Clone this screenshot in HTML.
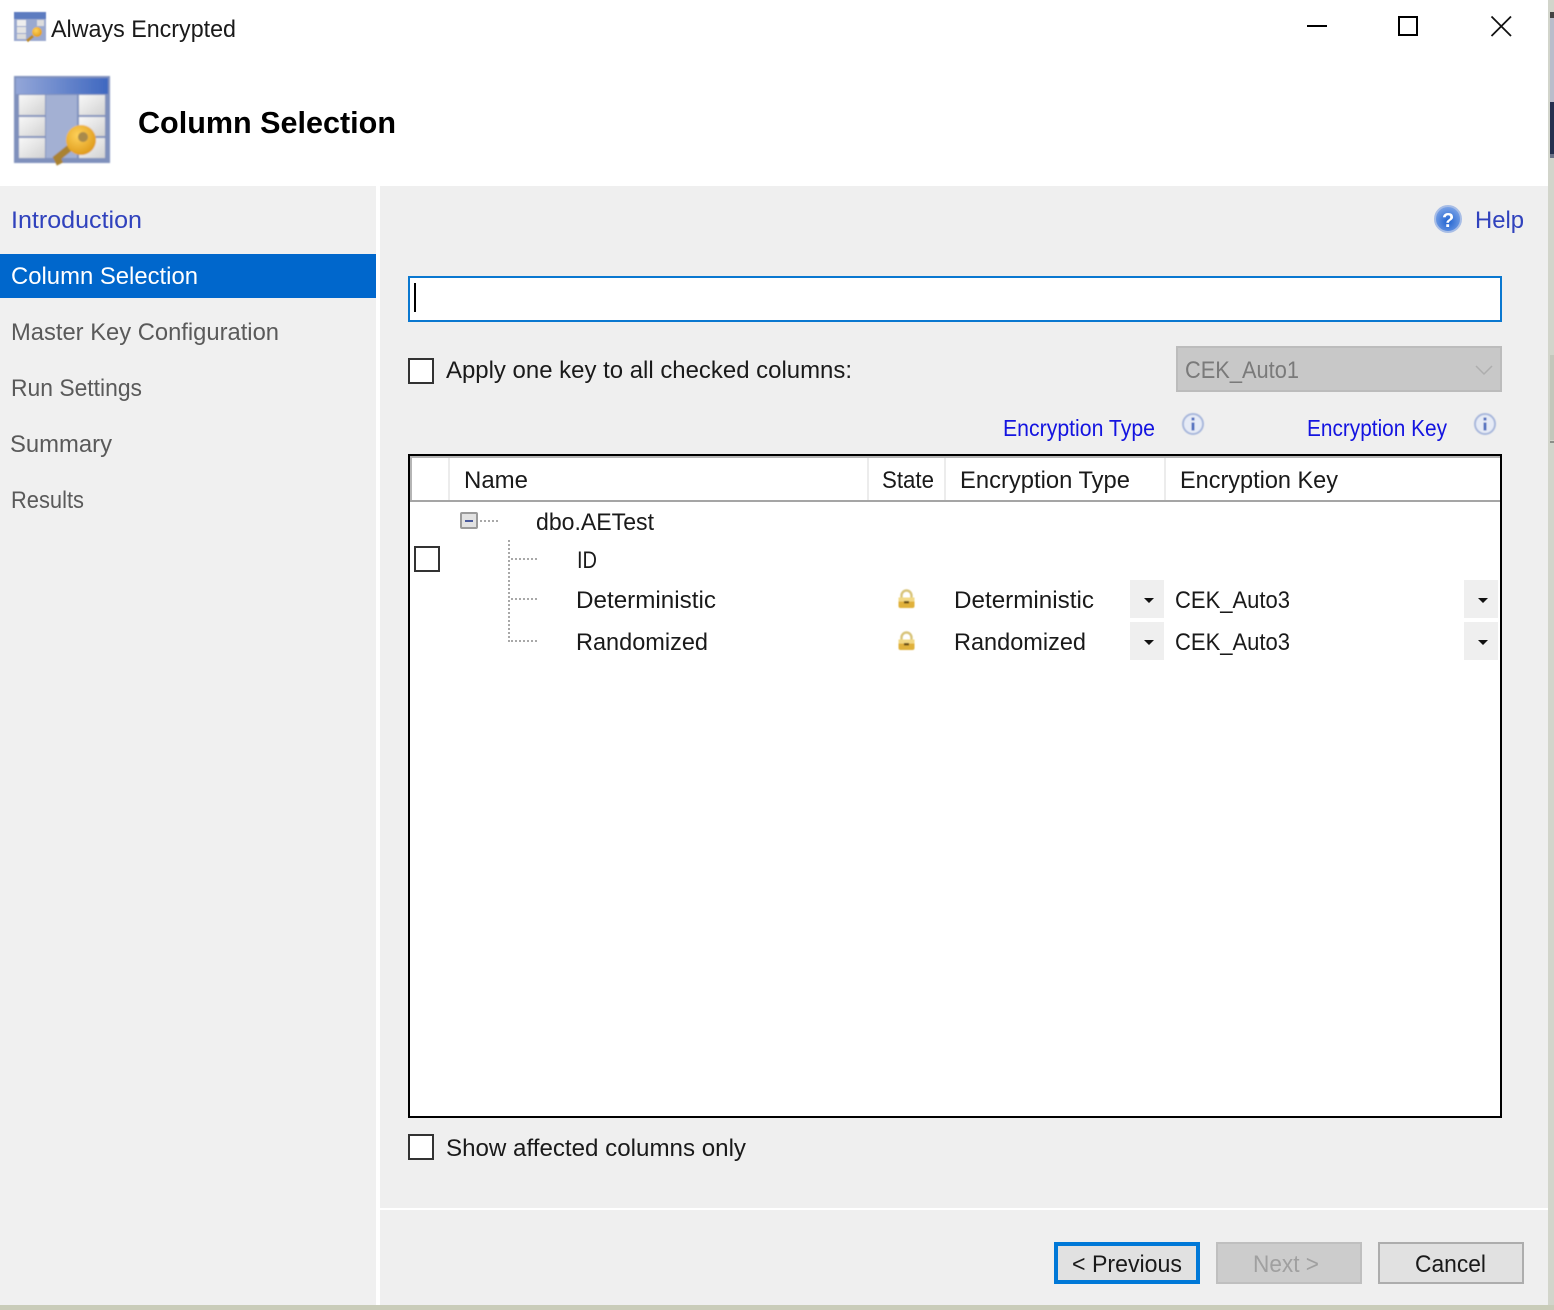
<!DOCTYPE html>
<html lang="en"><head><meta charset="utf-8"><title>Always Encrypted</title>
<style>
html,body{margin:0;padding:0;background:#fff;width:1554px;height:1310px;overflow:hidden}
svg{display:block}
text{font-family:"Liberation Sans",sans-serif;font-size:24px;fill:#1a1a1a}
.nav{fill:#5a5a5a}
.lnk{fill:#1414e0;font-size:23px}
.blu{fill:#3042bd}
</style></head><body>
<svg xmlns="http://www.w3.org/2000/svg" width="1554" height="1310" viewBox="0 0 1554 1310">
<defs>
<filter id="soft" x="-10%" y="-10%" width="120%" height="120%"><feGaussianBlur stdDeviation="0.8"/></filter>
<filter id="soft2" x="-20%" y="-20%" width="140%" height="140%"><feGaussianBlur stdDeviation="0.6"/></filter>
<linearGradient id="hd" x1="0" x2="1" y1="0" y2="0"><stop offset="0" stop-color="#93a6d8"/><stop offset="1" stop-color="#3f68c0"/></linearGradient>
<linearGradient id="cell" x1="0" x2="1" y1="0" y2="1"><stop offset="0" stop-color="#f8f8f8"/><stop offset="1" stop-color="#d2d2d2"/></linearGradient>
<radialGradient id="gold" cx=".4" cy=".35" r=".8"><stop offset="0" stop-color="#ffd25a"/><stop offset="1" stop-color="#d8900f"/></radialGradient>
<radialGradient id="hb" cx=".5" cy=".6" r=".6"><stop offset="0" stop-color="#1f62d0"/><stop offset="1" stop-color="#7fa6e8"/></radialGradient>
<g id="lock" filter="url(#soft2)"><path d="M3.5 8V5.5a5 5 0 0 1 10 0V8" fill="none" stroke="#d8c47a" stroke-width="2.4"/><rect x="0.5" y="7.5" width="16" height="10.5" rx="2" fill="#e0b13a"/><rect x="0.5" y="7.5" width="16" height="4" fill="#f2d884"/><rect x="6" y="11" width="5" height="2.5" fill="#6e5312"/></g>
<g id="info" filter="url(#soft2)"><circle cx="11" cy="11" r="10" fill="#e6ebf6" stroke="#a9b8dc" stroke-width="2"/><rect x="9.5" y="9.5" width="3" height="8" fill="#4f6fc0"/><rect x="9.5" y="4.5" width="3" height="3" fill="#4f6fc0"/></g>
</defs>

<!-- right window edge -->
<rect x="1548" y="0" width="6" height="1310" fill="#d2d5cb"/>
<rect x="1550" y="12" width="4" height="6" fill="#444"/>
<rect x="1550" y="18" width="4" height="84" fill="#b9bdcb"/>
<rect x="1550" y="102" width="4" height="52" fill="#25304f"/>
<rect x="1550" y="154" width="4" height="4" fill="#6b7287"/>
<rect x="1550" y="355" width="4" height="85" fill="#c3c7bb"/>
<rect x="1550" y="441" width="4" height="2" fill="#8c8f88"/>

<!-- title bar -->
<g filter="url(#soft2)">
<rect x="14" y="12" width="32" height="29" fill="#9aa9cf"/>
<rect x="14" y="12" width="32" height="7" fill="#5d7cc0"/>
<rect x="17" y="20" width="9" height="6" fill="#eee"/><rect x="17" y="27" width="9" height="6" fill="#e4e4e4"/><rect x="17" y="34" width="9" height="5" fill="#dcdcdc"/>
<rect x="37" y="20" width="7" height="6" fill="#ddd"/>
<circle cx="37" cy="32" r="5" fill="url(#gold)"/><path d="M33 36l-6 5" stroke="#b98a26" stroke-width="3"/>
</g>
<text x="51" y="37" textLength="185" lengthAdjust="spacingAndGlyphs">Always Encrypted</text>
<rect x="1307" y="25" width="20" height="2" fill="#000"/>
<rect x="1399" y="17" width="18" height="18" fill="none" stroke="#000" stroke-width="2"/>
<path d="M1491.5 16.5l19.5 19.5M1511 16.5l-19.5 19.5" stroke="#111" stroke-width="1.8" fill="none"/>

<!-- header icon -->
<g filter="url(#soft)">
<rect x="14" y="76" width="96" height="87" fill="#7f90bc"/>
<rect x="16" y="78" width="92" height="16" fill="url(#hd)"/>
<rect x="46" y="95" width="31" height="63" fill="#a3b0d3"/>
<rect x="19" y="95" width="26" height="20" fill="url(#cell)"/><rect x="19" y="117" width="26" height="19" fill="url(#cell)"/><rect x="19" y="138" width="26" height="20" fill="url(#cell)"/>
<rect x="79" y="95" width="26" height="20" fill="url(#cell)"/><rect x="79" y="117" width="26" height="19" fill="url(#cell)"/><rect x="79" y="138" width="26" height="20" fill="url(#cell)"/>
<path d="M72 146L57 158l3 6" stroke="#a98230" stroke-width="7" fill="none"/>
<circle cx="81" cy="140" r="15" fill="url(#gold)"/><circle cx="83" cy="137" r="5" fill="#a98a4c"/>
</g>
<text x="138" y="133" textLength="258" lengthAdjust="spacingAndGlyphs" style="font-weight:700;font-size:31px;fill:#000">Column Selection</text>

<!-- panels -->
<rect x="0" y="186" width="376" height="1119" fill="#f0f0f0"/>
<rect x="380" y="186" width="1168" height="1119" fill="#efefef"/>
<rect x="380" y="1208" width="1168" height="2" fill="#fff"/>
<rect x="0" y="1305" width="1554" height="5" fill="#c9ccb9"/>

<!-- sidebar -->
<rect x="0" y="254" width="376" height="44" fill="#0067cc"/>
<text class="blu" x="11" y="228" textLength="131" lengthAdjust="spacingAndGlyphs">Introduction</text>
<text x="11" y="284" textLength="187" lengthAdjust="spacingAndGlyphs" style="fill:#fff">Column Selection</text>
<text class="nav" x="11" y="340" textLength="268" lengthAdjust="spacingAndGlyphs">Master Key Configuration</text>
<text class="nav" x="11" y="396" textLength="131" lengthAdjust="spacingAndGlyphs">Run Settings</text>
<text class="nav" x="10" y="452" textLength="102" lengthAdjust="spacingAndGlyphs">Summary</text>
<text class="nav" x="11" y="508" textLength="73" lengthAdjust="spacingAndGlyphs">Results</text>

<!-- help -->
<circle cx="1448" cy="219" r="13" fill="url(#hb)" stroke="#a7bde6" stroke-width="2"/>
<text x="1442" y="227" style="font-size:20px;font-weight:700;fill:#fff">?</text>
<text class="blu" x="1475" y="228" textLength="49" lengthAdjust="spacingAndGlyphs">Help</text>

<!-- search -->
<rect x="409" y="277" width="1092" height="44" fill="#fff" stroke="#0a78d0" stroke-width="2"/>
<rect x="414" y="283" width="2" height="29" fill="#000"/>

<!-- apply key -->
<rect x="409" y="359" width="24" height="24" fill="#fff" stroke="#333" stroke-width="2"/>
<text x="446" y="378" textLength="406" lengthAdjust="spacingAndGlyphs">Apply one key to all checked columns:</text>
<rect x="1177" y="347" width="324" height="44" fill="#c8c8c8" stroke="#bcbcbc" stroke-width="2"/>
<text x="1185" y="378" textLength="114" lengthAdjust="spacingAndGlyphs" style="fill:#7a7a7a">CEK_Auto1</text>
<path d="M1476 366l8 8 8-8" fill="none" stroke="#aeaeae" stroke-width="1.5"/>

<!-- links -->
<text class="lnk" x="1003" y="436" textLength="152" lengthAdjust="spacingAndGlyphs">Encryption Type</text>
<use href="#info" x="1182" y="413"/>
<text class="lnk" x="1307" y="436" textLength="140" lengthAdjust="spacingAndGlyphs">Encryption Key</text>
<use href="#info" x="1474" y="413"/>

<!-- grid -->
<rect x="409" y="455" width="1092" height="662" fill="#fff" stroke="#000" stroke-width="2"/>
<rect x="410" y="456" width="1090" height="2" fill="#b5b5b5"/>
<rect x="410" y="458" width="2" height="42" fill="#b5b5b5"/>
<rect x="410" y="500" width="1090" height="2" fill="#a5a5a5"/>
<rect x="448" y="458" width="2" height="42" fill="#ececec"/>
<rect x="867" y="458" width="2" height="42" fill="#ececec"/>
<rect x="944" y="458" width="2" height="42" fill="#ececec"/>
<rect x="1164" y="458" width="2" height="42" fill="#ececec"/>
<text x="464" y="488" textLength="64" lengthAdjust="spacingAndGlyphs">Name</text>
<text x="882" y="488" textLength="52" lengthAdjust="spacingAndGlyphs">State</text>
<text x="960" y="488" textLength="170" lengthAdjust="spacingAndGlyphs">Encryption Type</text>
<text x="1180" y="488" textLength="158" lengthAdjust="spacingAndGlyphs">Encryption Key</text>

<!-- tree -->
<rect x="461" y="513" width="16" height="15" rx="1" fill="#e2e2e2" stroke="#9a9a9a" stroke-width="2"/>
<rect x="465" y="520" width="8" height="2" fill="#4a5a9c"/>
<path d="M480 521h18" stroke="#a8a8a8" stroke-width="2" stroke-dasharray="2 2"/>
<path d="M509 540v102" stroke="#a8a8a8" stroke-width="2" stroke-dasharray="2 2"/>
<path d="M511 559h28M511 599h28M511 641h28" stroke="#a8a8a8" stroke-width="2" stroke-dasharray="2 2"/>
<text x="536" y="530" textLength="118" lengthAdjust="spacingAndGlyphs">dbo.AETest</text>
<rect x="415" y="547" width="24" height="24" fill="#fff" stroke="#333" stroke-width="2"/>
<text x="577" y="568" textLength="20" lengthAdjust="spacingAndGlyphs">ID</text>
<text x="576" y="608" textLength="140" lengthAdjust="spacingAndGlyphs">Deterministic</text>
<text x="576" y="650" textLength="132" lengthAdjust="spacingAndGlyphs">Randomized</text>
<use href="#lock" x="898" y="590"/>
<use href="#lock" x="898" y="632"/>
<text x="954" y="608" textLength="140" lengthAdjust="spacingAndGlyphs">Deterministic</text>
<text x="954" y="650" textLength="132" lengthAdjust="spacingAndGlyphs">Randomized</text>
<rect x="1130" y="580" width="34" height="38" fill="#efefef"/>
<rect x="1130" y="622" width="34" height="38" fill="#efefef"/>
<path d="M1144 598h10l-5 5z M1144 640h10l-5 5z" fill="#111"/>
<text x="1175" y="608" textLength="115" lengthAdjust="spacingAndGlyphs">CEK_Auto3</text>
<text x="1175" y="650" textLength="115" lengthAdjust="spacingAndGlyphs">CEK_Auto3</text>
<rect x="1464" y="580" width="34" height="38" fill="#efefef"/>
<rect x="1464" y="622" width="34" height="38" fill="#efefef"/>
<path d="M1478 598h10l-5 5z M1478 640h10l-5 5z" fill="#111"/>

<!-- show affected -->
<rect x="409" y="1135" width="24" height="24" fill="#fff" stroke="#333" stroke-width="2"/>
<text x="446" y="1156" textLength="300" lengthAdjust="spacingAndGlyphs">Show affected columns only</text>

<!-- buttons -->
<rect x="1056" y="1244" width="142" height="38" fill="#e1e1e1" stroke="#0078d7" stroke-width="4"/>
<text x="1072" y="1272" textLength="110" lengthAdjust="spacingAndGlyphs">&lt; Previous</text>
<rect x="1217" y="1243" width="144" height="40" fill="#cccccc" stroke="#bfbfbf" stroke-width="2"/>
<text x="1253" y="1272" textLength="66" lengthAdjust="spacingAndGlyphs" style="fill:#a0a0a0">Next &gt;</text>
<rect x="1379" y="1243" width="144" height="40" fill="#e1e1e1" stroke="#adadad" stroke-width="2"/>
<text x="1415" y="1272" textLength="71" lengthAdjust="spacingAndGlyphs">Cancel</text>
</svg>
</body></html>
